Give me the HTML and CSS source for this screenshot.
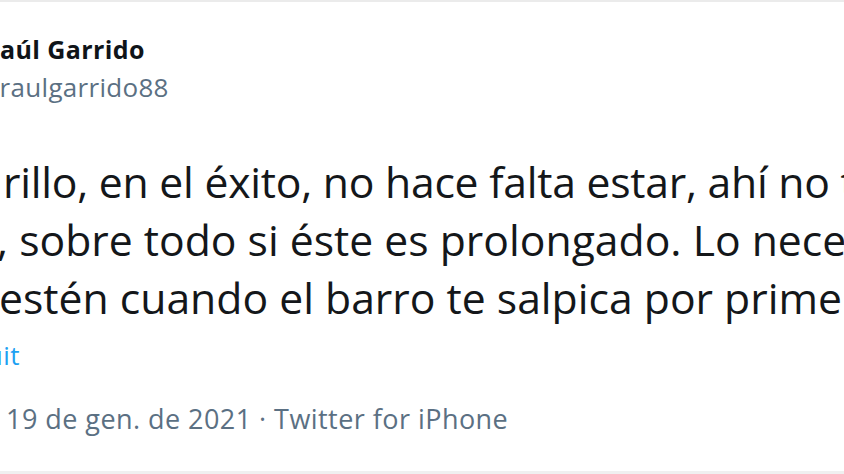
FILE: index.html
```html
<!DOCTYPE html>
<html lang="es">
<head>
<meta charset="utf-8">
<title>Tweet</title>
<link rel="stylesheet" href="styles.css">
</head>
<body>
<div class="tweet">
  <div class="author">
    <div class="name">Raúl Garrido</div>
    <div class="handle">@raulgarrido88</div>
  </div>
  <div class="text">
    <div class="line l1">rillo, en el éxito, no hace falta estar, ahí no te</div>
    <div class="line l2">, sobre todo si éste es prolongado. Lo necesario es que</div>
    <div class="line l3">estén cuando el barro te salpica por primera vez.</div>
  </div>
  <div class="translate">Tradueix el Tuit</div>
  <div class="meta">19 de gen. de 2021 · Twitter for iPhone</div>
</div>
</body>
</html>
```
FILE: styles.css
```css
html, body {
  margin: 0;
  padding: 0;
  background: #ffffff;
  overflow: hidden;
}
.tweet {
  width: 844px;
  height: 474px;
  box-sizing: border-box;
  border-top: 2px solid #ebebeb;
  border-bottom: 3px solid #f0f0f0;
  padding-top: 32px;
  font-family: "Open Sans", "Noto Sans", sans-serif;
  overflow: hidden;
  display: flex;
  flex-direction: column;
}
.author {
  display: flex;
  flex-direction: column;
}
.name {
  font-size: 25px;
  line-height: 30px;
  font-weight: 700;
  letter-spacing: 0.4px;
  color: #0f1419;
  margin-left: -17px;
  white-space: nowrap;
}
.handle {
  font-size: 26px;
  line-height: 30px;
  letter-spacing: 0.3px;
  color: #5b7083;
  margin-top: 8px;
  margin-left: -24px;
  white-space: nowrap;
}
.text {
  margin-top: 51px;
  color: #14171a;
  font-size: 42.7px;
  line-height: 58px;
}
.line {
  white-space: nowrap;
}
.l1 { margin-left: 3px; letter-spacing: -0.25px; }
.l2 { margin-left: -3px; }
.l3 { margin-left: -1px; }
.translate {
  margin-top: 13px;
  font-size: 26px;
  line-height: 30px;
  letter-spacing: 0.45px;
  color: #1da1f2;
  margin-left: -174px;
  white-space: nowrap;
}
.meta {
  margin-top: 32px;
  font-size: 27px;
  line-height: 34px;
  letter-spacing: 0.45px;
  color: #5b7083;
  margin-left: 6px;
  white-space: nowrap;
}
```
